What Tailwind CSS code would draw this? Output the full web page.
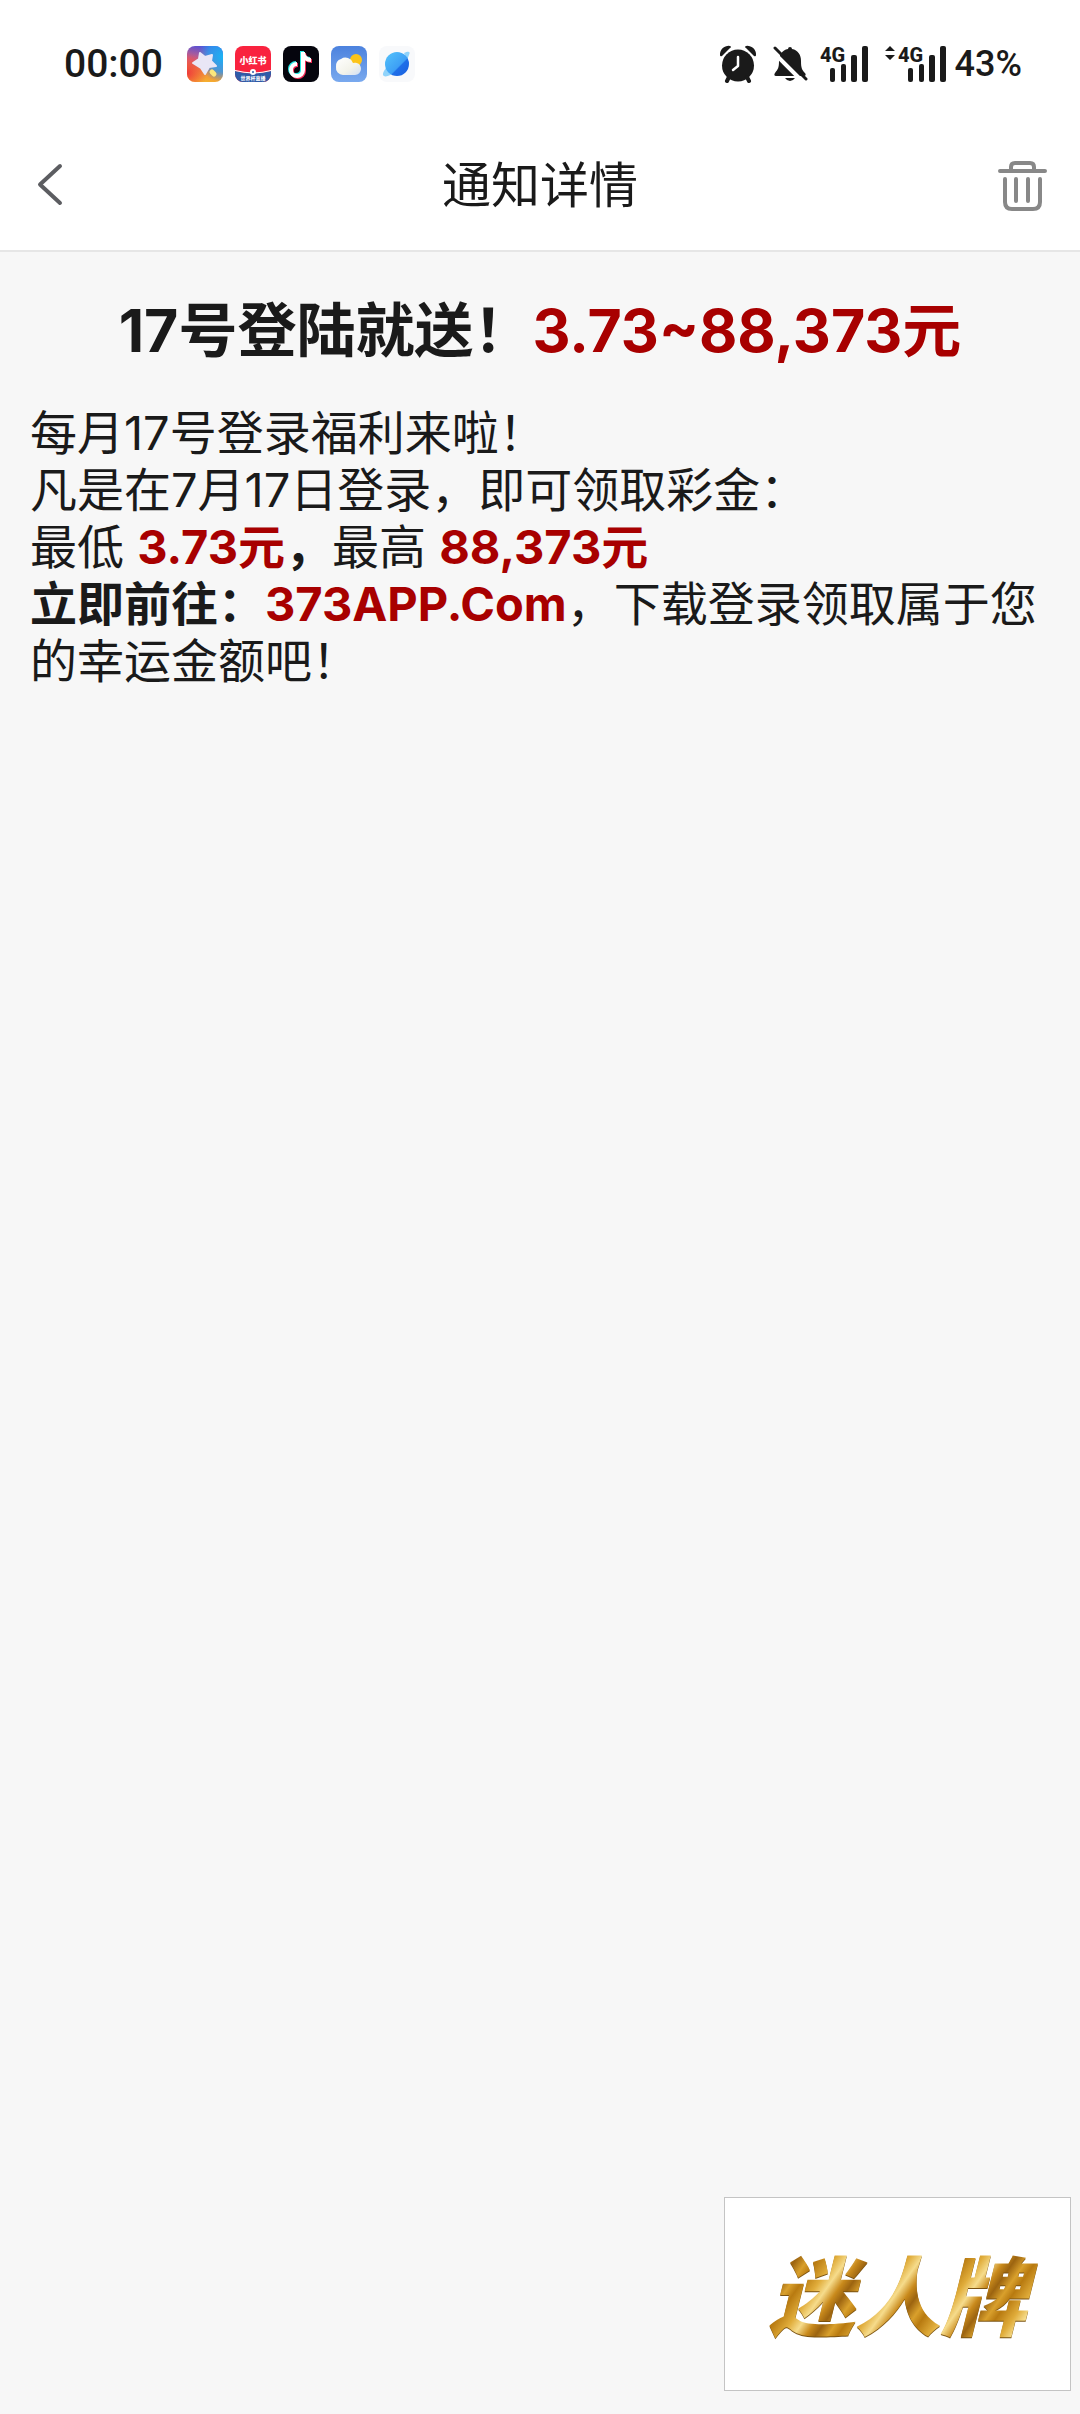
<!DOCTYPE html>
<html lang="zh-CN">
<head>
  <meta charset="UTF-8" />
  <meta name="viewport" content="width=device-width, initial-scale=1.0"/>
  <title>通知详情</title>
  <script src="https://cdn.jsdelivr.net/npm/@tailwindcss/browser@4"></script>
</head>
<body class="relative min-h-screen flex flex-col bg-[#f7f7f7] text-[#1a1a1a] font-['Inter','Noto_Sans_CJK_SC',sans-serif]">

  <!-- Status bar -->
  <div class="flex items-center justify-between h-[120px] pt-2 pl-16 pr-[58px] bg-white">
    <div class="flex items-center gap-3">
      <span class="mr-3 text-[39px] leading-none font-medium font-['Roboto',sans-serif]">00:00</span>

      <svg class="size-9" viewBox="0 0 36 36" aria-hidden="true">
        <defs>
          <linearGradient id="themeBg" x1="0.6" y1="0" x2="0.4" y2="1">
            <stop offset="0" stop-color="#4a4fe0"/>
            <stop offset="0.45" stop-color="#d8607a"/>
            <stop offset="0.7" stop-color="#f08a3c"/>
            <stop offset="1" stop-color="#f6b52e"/>
          </linearGradient>
          <radialGradient id="themeBlue" cx="1" cy="0.3" r="0.7">
            <stop offset="0" stop-color="#19b4f5"/>
            <stop offset="0.6" stop-color="#2a9df0" stop-opacity="0.8"/>
            <stop offset="1" stop-color="#2a9df0" stop-opacity="0"/>
          </radialGradient>
          <radialGradient id="themeRed" cx="0" cy="0.75" r="0.55">
            <stop offset="0" stop-color="#ef3b3b"/>
            <stop offset="1" stop-color="#ef3b3b" stop-opacity="0"/>
          </radialGradient>
        </defs>
        <rect width="36" height="36" rx="8" fill="url(#themeBg)"/>
        <rect width="36" height="36" rx="8" fill="url(#themeBlue)"/>
        <rect width="36" height="36" rx="8" fill="url(#themeRed)"/>
        <path d="M13 7l5 4 7-2-1 6 5 5-7 1-4 7-4-6-8-5 6-4z" fill="#e9e6f6" stroke="#e9e6f6" stroke-width="2" stroke-linejoin="round"/>
        <path d="M25 26l2 2" stroke="#fbe77c" stroke-width="5" stroke-linecap="round"/>
      </svg>

      <svg class="size-9" viewBox="0 0 36 36" aria-hidden="true">
        <defs>
          <clipPath id="redClip"><rect width="36" height="36" rx="8"/></clipPath>
        </defs>
        <g clip-path="url(#redClip)">
          <rect width="36" height="36" fill="#f9233f"/>
          <path d="M0 25q18 5 36 0v11H0z" fill="#2f5ba8"/>
          <path d="M0 24.500q18 5 36 0" fill="none" stroke="#fff" stroke-width="1.200"/>
          <circle cx="18" cy="26" r="3" fill="#fff"/>
          <circle cx="18" cy="26" r="1" fill="#2f5ba8"/>
          <text x="18" y="18" text-anchor="middle" font-family="Noto Sans CJK SC, sans-serif" font-weight="900" font-size="9" fill="#fff">小红书</text>
          <text x="18" y="34" text-anchor="middle" font-family="Noto Sans CJK SC, sans-serif" font-weight="700" font-size="5" fill="#fff">世界杯直播</text>
        </g>
      </svg>

      <svg class="size-9" viewBox="0 0 36 36" aria-hidden="true">
        <rect width="36" height="36" rx="8" fill="#05050d"/>
        <g fill="none" stroke-width="4">
          <path d="M19 5v18a6 6 0 1 1-6-6M19 6c1 5 4 7 8 7" stroke="#25e8e4"/>
          <path d="M21 7v18a6 6 0 1 1-6-6M21 8c1 5 4 7 8 7" stroke="#f72c58"/>
          <path d="M20 6v18a6 6 0 1 1-6-6M20 7c1 5 4 7 8 7" stroke="#fff"/>
        </g>
      </svg>

      <svg class="size-9" viewBox="0 0 36 36" aria-hidden="true">
        <defs>
          <linearGradient id="skyBg" x1="0" y1="0" x2="0" y2="1">
            <stop offset="0" stop-color="#4c82de"/>
            <stop offset="1" stop-color="#79a9ee"/>
          </linearGradient>
          <linearGradient id="cloud" x1="0" y1="0" x2="1" y2="1">
            <stop offset="0" stop-color="#fff"/>
            <stop offset="0.6" stop-color="#f3f3ea"/>
            <stop offset="1" stop-color="#cfdef6"/>
          </linearGradient>
        </defs>
        <rect width="36" height="36" rx="8" fill="url(#skyBg)"/>
        <circle cx="25" cy="14" r="6" fill="#fcc419"/>
        <path d="M12 29a7 7 0 0 1-7-8 7 7 0 0 1 5-8 8 8 0 0 1 12 4 6 6 0 0 1 8 6 6 6 0 0 1-6 6z" fill="url(#cloud)"/>
      </svg>

      <svg class="size-9" viewBox="0 0 36 36" aria-hidden="true">
        <defs>
          <linearGradient id="planet" x1="0" y1="0" x2="1" y2="1">
            <stop offset="0" stop-color="#55c4fb"/>
            <stop offset="0.58" stop-color="#3d9ff5"/>
            <stop offset="0.62" stop-color="#1f6fe8"/>
            <stop offset="1" stop-color="#1a5fe0"/>
          </linearGradient>
        </defs>
        <rect width="36" height="36" rx="8" fill="#f8f9fb"/>
        <path d="M25 7c4-2 7-2 5 2l-2 5M7 22c-3 4-4 7-2 8 1 1 5 0 8-2" fill="#8fd3fb"/>
        <circle cx="18" cy="18" r="12" fill="url(#planet)"/>
      </svg>
    </div>

    <div class="flex items-center">
      <svg class="w-9 h-[38px] mr-4" viewBox="0 0 36 38" aria-label="闹钟">
        <g fill="#1a1a1a">
          <circle cx="18" cy="20.500" r="16"/>
          <path d="M0 10a8.500 8.500 0 0 1 10-9q2 1 0 2L2 11q-2 1-2-1zM36 10a8.500 8.500 0 0 0-10-9q-2 1 0 2l8 8q2 1 2-1z"/>
        </g>
        <path d="M9 32l-2 4M27 32l2 4" stroke="#1a1a1a" stroke-width="4" stroke-linecap="round"/>
        <path d="M18 12v9l-5 4" fill="none" stroke="#fff" stroke-width="2.500" stroke-linecap="round" stroke-linejoin="round"/>
      </svg>
      <svg class="w-9 h-[38px] mr-3" viewBox="0 0 36 38" aria-label="静音">
        <path d="M18 2q2 0 2 2c6 1 9 6 9 12 0 7 1 9 4 12 1 1 1 3-1 3H4c-2 0-2-2-1-3 3-4 4-5 4-12C7 10 10 5 16 4q0-2 2-2z" fill="#1a1a1a"/>
        <path d="M13 33h10q-2 3-5 3t-5-3z" fill="#1a1a1a"/>
        <path d="M0 6l31 31" stroke="#fff" stroke-width="4"/>
        <path d="M3 3l31 31" stroke="#1a1a1a" stroke-width="3" stroke-linecap="round"/>
      </svg>
      <svg class="w-[49px] h-[38px] mr-4 overflow-visible" viewBox="0 0 49 38" aria-label="4G 信号">
        <text x="0" y="17" font-family="Roboto, sans-serif" font-weight="800" font-size="20" fill="#1a1a1a">4G</text>
        <g fill="#1a1a1a">
          <rect x="10" y="23" width="5" height="14" rx="2"/>
          <rect x="21" y="19" width="5" height="18" rx="2"/>
          <rect x="31" y="10" width="6" height="27" rx="2"/>
          <rect x="42" y="1" width="6" height="36" rx="2"/>
        </g>
      </svg>
      <svg class="w-[62px] h-[38px] mr-2 overflow-visible" viewBox="0 0 62 38" aria-label="4G 信号">
        <text x="13" y="17" font-family="Roboto, sans-serif" font-weight="800" font-size="20" fill="#1a1a1a">4G</text>
        <g fill="#1a1a1a">
          <path d="M5 1l5 5H0zM5 15l5-5H0z"/>
          <rect x="23" y="23" width="5" height="14" rx="2"/>
          <rect x="34" y="19" width="5" height="18" rx="2"/>
          <rect x="44" y="10" width="6" height="27" rx="2"/>
          <rect x="55" y="1" width="6" height="36" rx="2"/>
        </g>
      </svg>
      <span class="text-[36px] leading-none font-medium font-['Roboto',sans-serif]">43%</span>
    </div>
  </div>

  <!-- Header -->
  <header class="flex items-center justify-between h-[132px] px-8 bg-white border-b-2 border-[#e6e6e6]">
    <button type="button" aria-label="返回" class="w-[52px]">
      <svg class="w-9 h-12" viewBox="0 0 36 48" fill="none" stroke="#5c5d61" stroke-width="4" stroke-linecap="round" stroke-linejoin="round">
        <path d="M28 5L8 23.500 28 42"/>
      </svg>
    </button>
    <h1 class="text-[49px] leading-none">通知详情</h1>
    <button type="button" aria-label="删除">
      <svg class="size-[52px]" viewBox="0 0 52 52" fill="none" stroke="#888" stroke-width="4" stroke-linecap="round" stroke-linejoin="round">
        <path d="M4 12h45M15 11V8q0-4 4-4h15q4 0 4 4v3M9 20v23q0 7 7 7h21q7 0 7-7V20M20 20v22M32 20v22"/>
      </svg>
    </button>
  </header>

  <!-- Notice -->
  <main class="flex-1 px-[30px] pt-10">
    <h2 class="text-center text-[59px] leading-[78px] font-bold">17号登陆就送！<span class="text-[#a80000]">3.73~88,373元</span></h2>
    <div class="mt-[34px] text-[47px] leading-[57px]">
      <p>每月17号登录福利来啦！</p>
      <p>凡是在7月17日登录，即可领取彩金：</p>
      <p>最低 <b><span class="text-[#a80000]">3.73元</span>，</b>最高 <b class="text-[#a80000]">88,373元</b></p>
      <p><b>立即前往：<span class="text-[#a80000]">373APP.Com</span></b>，下载登录领取属于您的幸运金额吧！</p>
    </div>
  </main>

  <!-- Floating banner -->
  <div class="absolute right-[9px] bottom-[23px] flex items-center justify-center w-[347px] h-[194px] bg-white border border-[#c4c4c4]">
    <span class="pl-4 pr-4 pt-2 text-[86px] leading-none font-black italic text-transparent bg-clip-text bg-[repeating-linear-gradient(125deg,#b87a10_0px,#e0ac3a_14px,#f6dc8c_24px,#c98a1c_34px,#9c6410_42px,#d9a02c_52px,#b87a10_60px)] drop-shadow-[0_1px_0_#7a5210]">迷人牌</span>
  </div>

</body>
</html>
